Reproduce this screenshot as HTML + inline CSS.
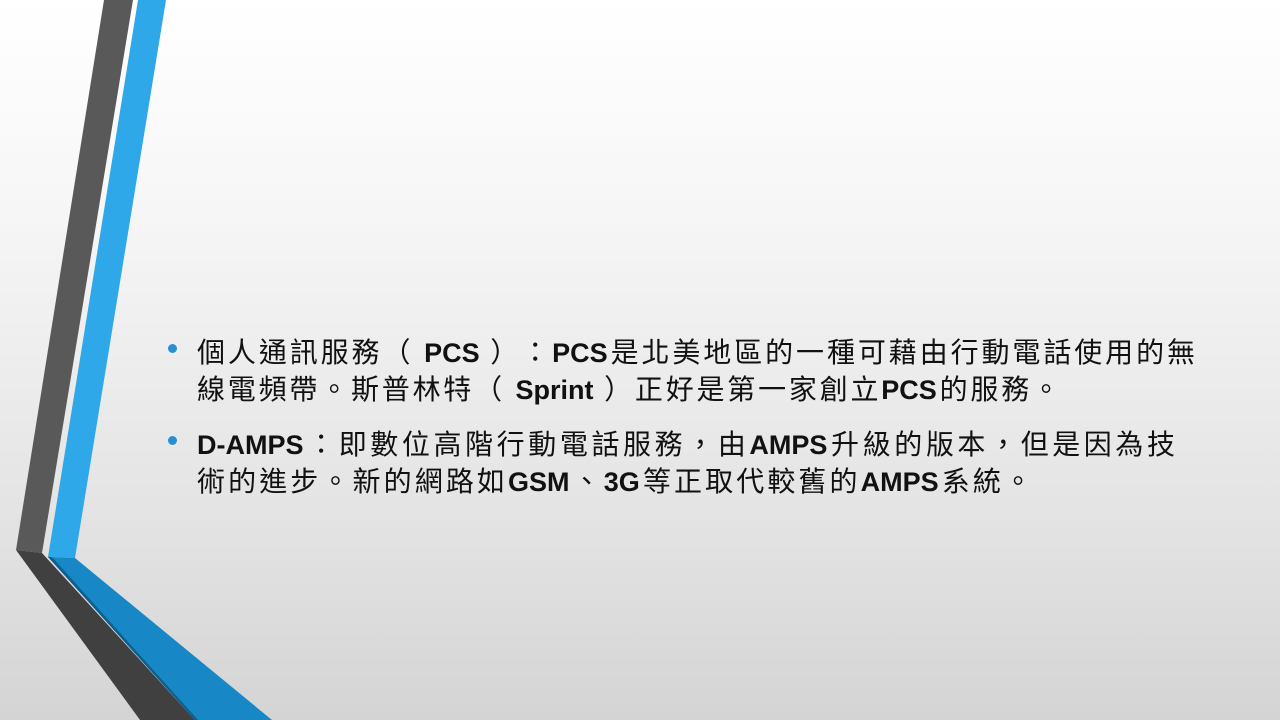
<!DOCTYPE html>
<html><head><meta charset="utf-8"><style>
html,body{margin:0;padding:0}
body{width:1280px;height:720px;overflow:hidden;position:relative;background:linear-gradient(#fff 0%,#f6f6f6 30%,#e2e2e2 75%,#d4d4d4 100%);font-family:"Liberation Sans","Noto Sans CJK TC",sans-serif;}
svg{position:absolute;left:0;top:0}
.l{position:absolute;left:197px;font-size:28px;line-height:37px;height:37px;color:#111;white-space:nowrap;text-align:justify;text-align-last:justify;text-spacing-trim:space-all;font-feature-settings:"fwid" 1}
.l b{font-weight:bold;font-family:"Liberation Sans",sans-serif;font-size:27px}
.d{position:absolute;left:168px;width:9px;height:9px;border-radius:50%;background:#2a8fd0}
</style></head><body>
<svg width="1280" height="720">
<polygon points="104,0 133,0 42,553 16,550" fill="#595959"/>
<polygon points="16,550 42,553 195,720 140,720" fill="#404040"/>
<polygon points="138,0 166,0 75,558 48,557" fill="#2ea8e8"/>
<polygon points="48,557 75,558 272,720 195,720" fill="#1787c6"/>
<polygon points="48,557 52,557 198,720 195,720" fill="#0d5f8e"/>
</svg>
<div class="d" style="top:344px"></div>
<div class="l" style="top:334px;width:998px">個人通訊服務（ <b>PCS</b> ）：<b>PCS</b>是北美地區的一種可藉由行動電話使用的無</div>
<div class="l" style="top:371px;width:863px">線電頻帶。斯普林特（ <b>Sprint</b> ）正好是第一家創立<b>PCS</b>的服務。</div>
<div class="d" style="top:436px"></div>
<div class="l" style="top:426px;width:978px"><b>D-AMPS</b>：即數位高階行動電話服務，由<b>AMPS</b>升級的版本，但是因為技</div>
<div class="l" style="top:463px;width:835px">術的進步。新的網路如<b>GSM</b>、<b>3G</b>等正取代較舊的<b>AMPS</b>系統。</div>
</body></html>
